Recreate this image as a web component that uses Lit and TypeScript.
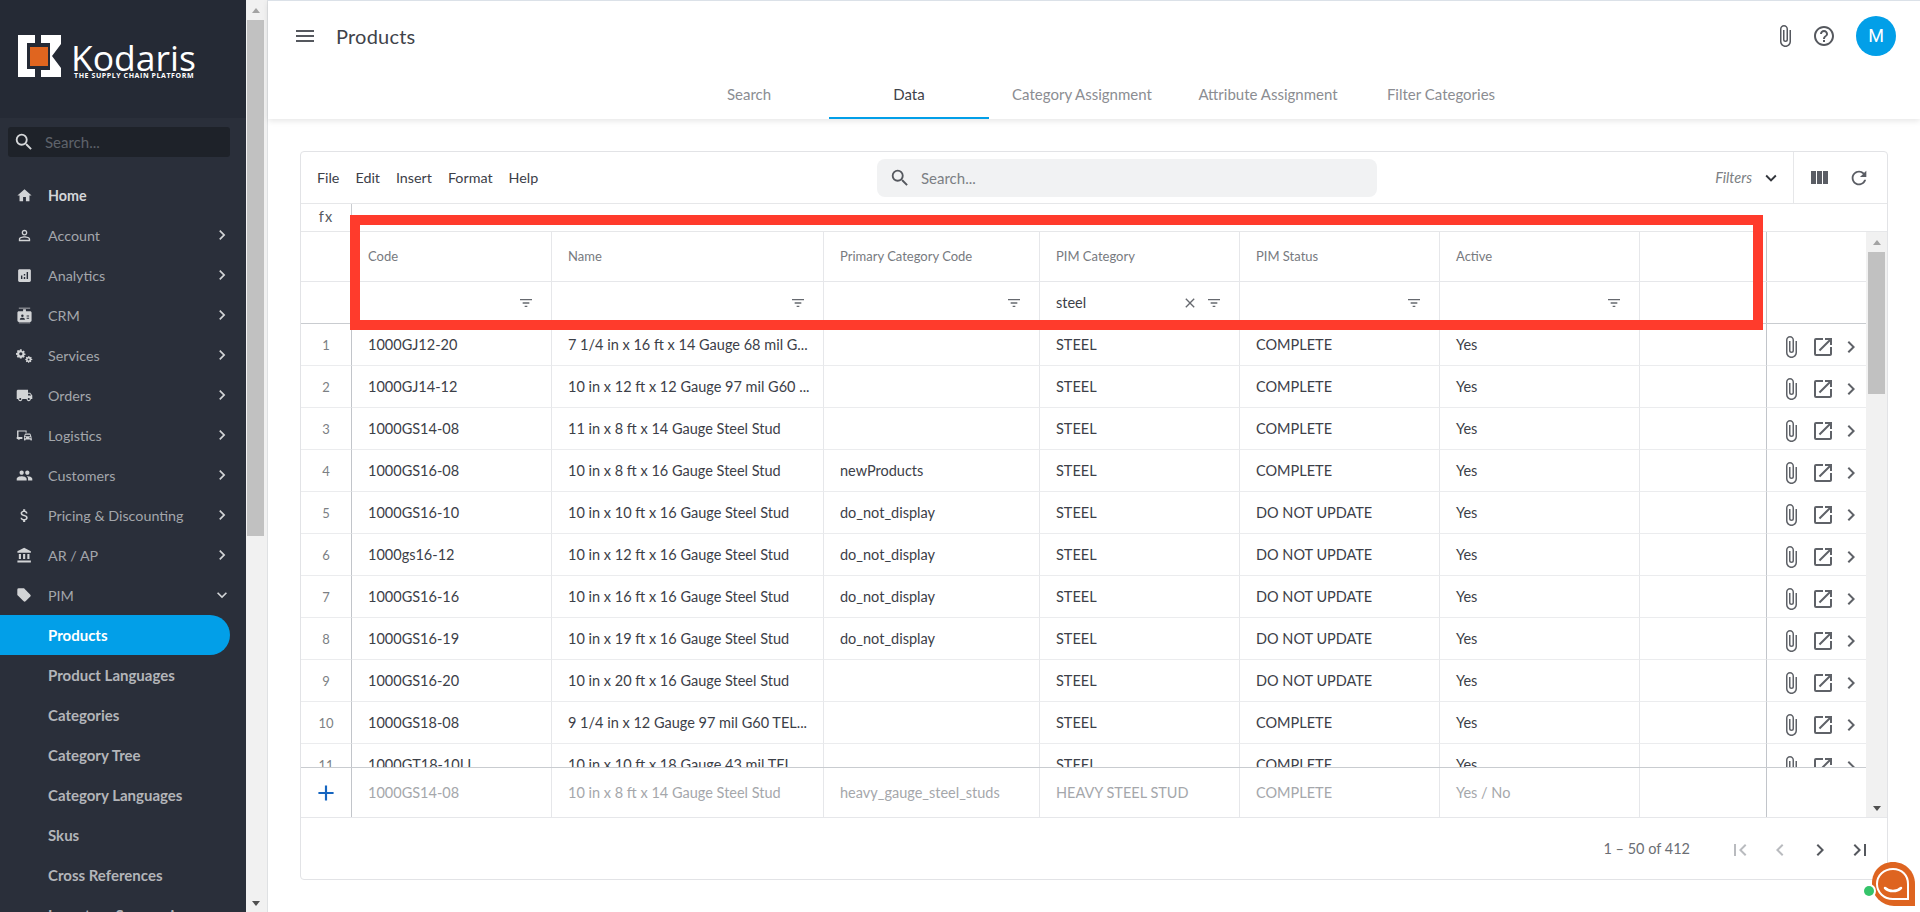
import { LitElement, html, css } from "lit";
import { customElement } from "lit/decorators.js";

const ic = (d: string, size = 24, cls = "") => html`<svg class=${cls} width=${size} height=${size} viewBox="0 0 24 24" fill="currentColor"><path d=${d}></path></svg>`;

const P = {
  home: "M10 20v-6h4v6h5v-8h3L12 3 2 12h3v8z",
  account: "M12 5.9a2.1 2.1 0 1 1 0 4.2 2.1 2.1 0 0 1 0-4.2m0 9c2.97 0 6.1 1.46 6.1 2.1v1.1H5.9V17c0-.64 3.13-2.1 6.1-2.1M12 4C9.79 4 8 5.79 8 8s1.79 4 4 4 4-1.79 4-4-1.79-4-4-4zm0 9c-2.67 0-8 1.34-8 4v3h16v-3c0-2.66-5.33-4-8-4z",
  analytics: "M19 3H5c-1.1 0-2 .9-2 2v14c0 1.1.9 2 2 2h14c1.1 0 2-.9 2-2V5c0-1.1-.9-2-2-2zM9 17H7v-5h2v5zm4 0h-2v-3h2v3zm0-5h-2v-2h2v2zm4 5h-2V7h2v10z",
  crm: "M20 6h-6V3h-4v3H4c-1.1 0-2 .9-2 2v11c0 1.1.9 2 2 2h16c1.1 0 2-.9 2-2V8c0-1.1-.9-2-2-2zM9 10.5a1.75 1.75 0 1 1 0 3.5 1.75 1.75 0 0 1 0-3.5zM12.5 18h-7v-1c0-1.2 2.3-1.8 3.5-1.8s3.5.6 3.5 1.8v1zm6-1.5H15V15h3.5v1.5zm0-3H15V12h3.5v1.5zM20 1H4v1h16zM20 22H4v1h16z",
  services: "M13.5 9.5l-1.6-.3a5 5 0 0 0-.4-1l.9-1.4-1.7-1.7-1.4.9a5 5 0 0 0-1-.4L8 3H5.6l-.3 1.6a5 5 0 0 0-1 .4l-1.4-.9L1.2 5.8l.9 1.4a5 5 0 0 0-.4 1L0 8.5v2.4l1.6.3c.1.3.2.7.4 1l-.9 1.4 1.7 1.7 1.4-.9c.3.2.7.3 1 .4l.3 1.6H8l.3-1.6c.3-.1.7-.2 1-.4l1.4.9 1.7-1.7-.9-1.4c.2-.3.3-.7.4-1l1.6-.3V9.5zM6.8 12a2.3 2.3 0 1 1 0-4.6 2.3 2.3 0 0 1 0 4.6zM23 18.4v-1.600l-1.200-.2-.3-.8.7-1-1.100-1.100-1 .7-.8-.3-.2-1.200H17l-.2 1.200-.8.3-1-.7-1.100 1.100.7 1-.3.8-1.200.2v1.600l1.200.2.3.8-.7 1 1.100 1.100 1-.7.8.3.2 1.200h1.600l.2-1.200.8-.3 1 .7 1.100-1.100-.7-1 .3-.8zM17.800 19a1.400 1.400 0 1 1 0-2.800 1.400 1.400 0 0 1 0 2.800z",
  orders: "M20 8h-3V4H3c-1.1 0-2 .9-2 2v11h2c0 1.66 1.34 3 3 3s3-1.34 3-3h6c0 1.66 1.34 3 3 3s3-1.34 3-3h2v-5l-3-4zM6 18.5c-.83 0-1.5-.67-1.5-1.5s.67-1.5 1.5-1.5 1.5.67 1.5 1.5-.67 1.5-1.5 1.5zm13.5-9l1.96 2.5H17V9.5h2.5zm-1.5 9c-.83 0-1.5-.67-1.5-1.5s.67-1.5 1.5-1.5 1.5.67 1.5 1.5-.67 1.5-1.5 1.5z",
  logistics: "M21.7 13.35l-1.2-3.4a1.1 1.1 0 0 0-1.05-.75h-5.9c-.48 0-.88.3-1.05.75l-1.2 3.4v4.9c0 .4.32.75.75.75h.75c.4 0 .75-.35.75-.75V17.5h6.7v.75c0 .4.32.75.75.75h.75c.42 0 .75-.35.75-.75zM13.6 10.9h5.8l.7 2h-7.2zM13.2 16a1 1 0 1 1 0-2 1 1 0 0 1 0 2zm6.6 0a1 1 0 1 1 0-2 1 1 0 0 1 0 2zM3 5h12v3h-1.5V6.5h-10V14H9v3H5.8a2 2 0 0 1-3.6 0H1v-3h.5V5z",
  customers: "M16 11c1.66 0 2.99-1.34 2.99-3S17.66 5 16 5c-1.66 0-3 1.34-3 3s1.34 3 3 3zm-8 0c1.66 0 2.99-1.34 2.99-3S9.66 5 8 5C6.34 5 5 6.34 5 8s1.34 3 3 3zm0 2c-2.33 0-7 1.17-7 3.5V19h14v-2.5c0-2.33-4.67-3.5-7-3.5zm8 0c-.29 0-.62.02-.97.05 1.16.84 1.97 1.97 1.97 3.45V19h6v-2.5c0-2.33-4.67-3.5-7-3.5z",
  dollar: "M11.8 10.9c-2.27-.59-3-1.2-3-2.15 0-1.09 1.01-1.85 2.7-1.85 1.78 0 2.44.85 2.5 2.1h2.21c-.07-1.72-1.12-3.3-3.21-3.81V3h-3v2.16c-1.94.42-3.5 1.68-3.5 3.61 0 2.31 1.91 3.46 4.7 4.13 2.5.6 3 1.48 3 2.41 0 .69-.49 1.79-2.7 1.79-2.06 0-2.87-.92-2.98-2.1h-2.2c.12 2.19 1.76 3.42 3.68 3.83V21h3v-2.15c1.95-.37 3.5-1.5 3.5-3.55 0-2.84-2.43-3.81-4.7-4.4z",
  bank: "M4 10v7h3v-7H4zm6 0v7h3v-7h-3zM2 22h19v-3H2v3zm14-12v7h3v-7h-3zM11.5 1L2 6v2h19V6l-9.5-5z",
  tag: "M12 2l9.500 9.500a2 2 0 0 1 0 2.800l-7.200 7.200a2 2 0 0 1-2.800 0L2 12V4a2 2 0 0 1 2-2z",
  right: "M10 6L8.59 7.41 13.17 12l-4.58 4.59L10 18l6-6z",
  down: "M16.59 8.59L12 13.17 7.41 8.59 6 10l6 6 6-6z",
  left: "M15.41 7.41L14 6l-6 6 6 6 1.41-1.41L10.83 12z",
  first: "M18.41 16.59L13.82 12l4.59-4.59L17 6l-6 6 6 6zM6 6h2v12H6z",
  last: "M5.59 7.41L10.18 12l-4.59 4.59L7 18l6-6-6-6zM16 6h2v12h-2z",
  search: "M15.5 14h-.79l-.28-.27A6.47 6.47 0 0 0 16 9.5 6.5 6.5 0 1 0 9.5 16c1.61 0 3.09-.59 4.23-1.57l.27.28v.79l5 4.99L20.49 19l-4.99-5zm-6 0C7.01 14 5 11.99 5 9.5S7.01 5 9.5 5 14 7.01 14 9.5 11.99 14 9.5 14z",
  menu: "M3 18h18v-2H3v2zm0-5h18v-2H3v2zm0-7v2h18V6H3z",
  clip: "M16.5 6v11.5c0 2.21-1.79 4-4 4s-4-1.79-4-4V5a2.5 2.5 0 0 1 5 0v10.5c0 .55-.45 1-1 1s-1-.45-1-1V6H10v9.5a2.5 2.5 0 0 0 5 0V5c0-2.21-1.79-4-4-4S7 2.79 7 5v12.5c0 3.04 2.46 5.5 5.5 5.5s5.5-2.46 5.5-5.5V6h-1.5z",
  help: "M11 18h2v-2h-2v2zm1-16C6.48 2 2 6.48 2 12s4.48 10 10 10 10-4.48 10-10S17.52 2 12 2zm0 18c-4.41 0-8-3.59-8-8s3.59-8 8-8 8 3.59 8 8-3.59 8-8 8zm0-14c-2.21 0-4 1.79-4 4h2c0-1.1.9-2 2-2s2 .9 2 2c0 2-3 1.75-3 5h2c0-2.25 3-2.5 3-5 0-2.21-1.79-4-4-4z",
  filter: "M3 6h18v2H3zM7 11h10v2H7zM10 16h4v2h-4z",
  close: "M19 6.41L17.59 5 12 10.59 6.41 5 5 6.41 10.59 12 5 17.59 6.41 19 12 13.41 17.59 19 19 17.59 13.41 12z",
  open: "M19 19H5V5h7V3H5a2 2 0 0 0-2 2v14a2 2 0 0 0 2 2h14c1.1 0 2-.9 2-2v-7h-2v7zM14 3v2h3.59l-9.83 9.83 1.41 1.41L19 6.41V10h2V3h-7z",
  columns: "M10 18h5V5h-5v13zm-6 0h5V5H4v13zM16 5v13h5V5h-5z",
  refresh: "M17.65 6.35A7.958 7.958 0 0 0 12 4c-4.42 0-7.99 3.58-7.99 8s3.57 8 7.99 8c3.73 0 6.84-2.55 7.73-6h-2.08A5.99 5.99 0 0 1 12 18c-3.31 0-6-2.69-6-6s2.69-6 6-6c1.66 0 3.14.69 4.22 1.78L13 11h7V4l-2.35 2.35z",
  plus: "M19 13h-6v6h-2v-6H5v-2h6V5h2v6h6v2z",
};

const NAV: [string, string, boolean][] = [
  ["Home", P.home, false],
  ["Account", P.account, true],
  ["Analytics", P.analytics, true],
  ["CRM", P.crm, true],
  ["Services", P.services, true],
  ["Orders", P.orders, true],
  ["Logistics", P.logistics, true],
  ["Customers", P.customers, true],
  ["Pricing & Discounting", P.dollar, true],
  ["AR / AP", P.bank, true],
];
const SUB = ["Product Languages", "Categories", "Category Tree", "Category Languages", "Skus", "Cross References", "Inventory Summaries"];

const ROWS: string[][] = [
  ["1000GJ12-20", "7 1/4 in x 16 ft x 14 Gauge 68 mil G...", "", "COMPLETE"],
  ["1000GJ14-12", "10 in x 12 ft x 12 Gauge 97 mil G60 ...", "", "COMPLETE"],
  ["1000GS14-08", "11 in x 8 ft x 14 Gauge Steel Stud", "", "COMPLETE"],
  ["1000GS16-08", "10 in x 8 ft x 16 Gauge Steel Stud", "newProducts", "COMPLETE"],
  ["1000GS16-10", "10 in x 10 ft x 16 Gauge Steel Stud", "do_not_display", "DO NOT UPDATE"],
  ["1000gs16-12", "10 in x 12 ft x 16 Gauge Steel Stud", "do_not_display", "DO NOT UPDATE"],
  ["1000GS16-16", "10 in x 16 ft x 16 Gauge Steel Stud", "do_not_display", "DO NOT UPDATE"],
  ["1000GS16-19", "10 in x 19 ft x 16 Gauge Steel Stud", "do_not_display", "DO NOT UPDATE"],
  ["1000GS16-20", "10 in x 20 ft x 16 Gauge Steel Stud", "", "DO NOT UPDATE"],
  ["1000GS18-08", "9 1/4 in x 12 Gauge 97 mil G60 TEL...", "", "COMPLETE"],
  ["1000GT18-10LL", "10 in x 10 ft x 18 Gauge 43 mil TEL...", "", "COMPLETE"],
];

@customElement("app-root")
export class AppRoot extends LitElement {
  static styles = css`
    :host { display: block; width: 1920px; height: 912px; overflow: hidden; font-family: "Lato", "Open Sans", sans-serif; position: relative; background: #fff; color: #3c4048; }
    svg { display: block; flex: none; }
    .app { display: flex; height: 912px; }
    .side { width: 246px; flex: none; background: #2a2f3a; overflow: hidden; color: #a3a6ab; }
    .brand { height: 118px; background: #252a35; box-sizing: border-box; padding: 34px 0 0 18px; display: flex; gap: 9px; }
    .word { color: #fff; display: flex; flex-direction: column; margin-top: 7.5px; }
    .word b { font: 400 35.5px/30px "Open Sans", sans-serif; }
    .word small { font: 700 7px/8px "Open Sans", sans-serif; letter-spacing: .58px; white-space: nowrap; margin-left: 3px; }
    .sbox { margin: 9px 16px 0 8px; height: 30px; background: #1e2229; border-radius: 3px; display: flex; align-items: center; padding-left: 5px; gap: 10px; color: #d6d8da; }
    .sbox span { font-size: 15px; color: #5e636b; }
    nav { margin-top: 18px; }
    .item { height: 40px; display: flex; align-items: center; padding-left: 16px; font-size: 14.3px; margin-right: 16px; }
    .item .t { margin-left: 16px; flex: 1; white-space: nowrap; }
    .item.home .t { color: #d4d6d9; font-weight: 700; }
    .item .i { color: #d2d4d6; width: 16px; display: flex; justify-content: center; }
    .item .ch { color: #d2d4d6; margin-right: -2px; }
    .sub { height: 40px; display: flex; align-items: center; padding-left: 48px; margin-right: 16px; font-size: 15px; font-weight: 700; color: #b3b5b9; white-space: nowrap; }
    .sub.on { background: #029fe8; color: #fff; border-radius: 0 20px 20px 0; }
    .bar { width: 22px; flex: none; background: #f1f1f1; border-right: 1px solid #dfe1e3; box-sizing: border-box; display: flex; flex-direction: column; align-items: center; }
    .bar .up, .sc .up { width: 0; height: 0; border: 4.5px solid transparent; border-top: 0; border-bottom: 5px solid #a3a3a3; margin-top: 8px; }
    .bar .th { width: 17px; height: 516px; background: #c1c1c1; margin-top: 7px; margin-left: -2px; }
    .bar .dn, .sc .dn { width: 0; height: 0; border: 4.5px solid transparent; border-bottom: 0; border-top: 5px solid #505050; margin-top: auto; margin-bottom: 6px; }
    .bar .up, .bar .dn { margin-left: -2px; }
    main { flex: 1; min-width: 0; display: flex; flex-direction: column; }
    header { height: 119px; flex: none; border-top: 1px solid #dbe1e8; box-sizing: border-box; box-shadow: 0 2px 6px rgba(0,0,0,.1); position: relative; display: flex; flex-direction: column; }
    .top { height: 69px; display: flex; align-items: center; padding: 0 24px 0 25px; color: #55585e; flex: none; }
    .top h1 { font: 400 20px "Lato", sans-serif; margin: 0 0 0 19px; color: #3f434a; flex: 1; letter-spacing: .2px; }
    .avatar { width: 40px; height: 40px; border-radius: 50%; background: #029fe8; color: #fff; font-size: 18px; display: flex; align-items: center; justify-content: center; margin-left: 20px; font-family: Roboto, sans-serif; }
    .helpi { margin-left: 15px; }
    .tabs { display: flex; justify-content: center; height: 49px; margin-left: 2px; }
    .tab { width: 160px; text-align: center; font-size: 15px; line-height: 48px; color: #8b8d92; white-space: nowrap; box-sizing: border-box; height: 49px; }
    .tab.wide { width: 186px; }
    .tab.on { color: #3f434a; border-bottom: 2px solid #029fe8; }
    .content { flex: 1; padding: 32px 32px 0 32px; min-height: 0; }
    .card { height: 729px; border: 1px solid #e2e3e6; border-radius: 4px; box-sizing: border-box; display: flex; flex-direction: column; position: relative; }
    .tools { height: 52px; flex: none; display: flex; align-items: stretch; border-bottom: 1px solid #e6e7e9; box-sizing: border-box; }
    .menu { display: flex; align-items: center; gap: 16px; padding-left: 16px; font-size: 14.3px; width: 576px; box-sizing: border-box; }
    .find { width: 500px; height: 38px; align-self: center; background: #f1f2f3; border-radius: 8px; display: flex; align-items: center; gap: 10px; padding-left: 12px; box-sizing: border-box; font-size: 15px; color: #7c7f84; }
    .find svg { color: #55585e; }
    .fil { margin-left: auto; display: flex; align-items: center; gap: 8px; font-style: italic; font-size: 14.5px; color: #7c7f84; padding-right: 11px; box-sizing: border-box; justify-content: flex-end; }
    .fil svg { color: #33363c; }
    .act { border-left: 1px solid #e6e7e9; width: 94px; flex: none; display: flex; align-items: center; gap: 17px; padding-left: 13px; box-sizing: border-box; color: #5a5d64; }
    .fx { height: 28px; flex: none; box-sizing: border-box; border-bottom: 1px solid #e6e7e9; display: flex; }
    .fx span { width: 51px; text-align: center; font-size: 14.5px; line-height: 25px; color: #55585e; border-right: 1px solid #c9ccd0; box-sizing: border-box; letter-spacing: 1px; }
    .gridwrap { height: 586px; flex: none; display: flex; }
    .tbl { flex: 1; min-width: 0; display: flex; flex-direction: column; }
    .head, .rows .r, .add { display: grid; grid-template-columns: 51px 200px 272px 216px 200px 200px 200px 127px 99px; flex: none; }
    .head > div, .r > div, .add > div { border-right: 1px solid #e6e7ea; box-sizing: border-box; padding-left: 16px; white-space: nowrap; overflow: hidden; display: flex; align-items: center; }
    .head > div:nth-child(1), .r > div:nth-child(1), .add > div:nth-child(1) { padding: 0; justify-content: center; border-right-color: #c2c5ca; }
    .head > div:nth-child(8), .r > div:nth-child(8), .add > div:nth-child(8) { border-right-color: #c2c5ca; }
    .head > div:nth-child(9), .r > div:nth-child(9), .add > div:nth-child(9) { border-right: 0; }
    .h1 { height: 50px; font-size: 13px; color: #777a80; border-bottom: 1px solid #e6e7ea; box-sizing: border-box; }
    .h1 > div { padding-bottom: 2px; }
    .h2 { height: 42px; border-bottom: 1px solid #c9ccd0; font-size: 14.5px; box-sizing: border-box; }
    .h2 > div { justify-content: flex-end; padding: 0 17px 0 16px !important; color: #66696f; gap: 8px; }
    .h2 .val { margin-right: auto; color: #3c4048; }
    .h2 > div:nth-child(1) { border-right-color: #e6e7ea !important; }
    .rows { height: 444px; overflow: hidden; flex: none; border-bottom: 1px solid #c9ccd0; box-sizing: border-box; }
    .r { height: 42px; font-size: 14.5px; color: #3c4048; }
    .r > div { border-bottom: 1px solid #ebecee; height: 42px; padding-bottom: 1px; }
    .r > div:first-child { font-size: 13px; color: #7c7f84; }
    .r .ac { padding: 5px 0 0 12px; color: #5f6268; gap: 8px; }
    .r .ac svg:last-child { margin-left: -4px; }
    .add { height: 50px; font-size: 14.5px; color: #a5a7ab; border-bottom: 1px solid #e6e7ea; box-sizing: border-box; }
    .add .pl { color: #1565c0; }
    .sc { width: 21px; flex: none; background: #f1f1f1; display: flex; flex-direction: column; align-items: center; border-bottom: 1px solid #e6e7ea; box-sizing: border-box; }
    .sc .th { width: 17px; height: 142px; background: #c1c1c1; margin-top: 7px; }
    .foot { flex: 1; display: flex; align-items: center; justify-content: flex-end; color: #6b6e74; font-size: 14.5px; padding-right: 15px; }
    .foot .cnt { margin-right: 38px; }
    .pg { display: flex; gap: 16px; color: #55585e; margin-top: 3px; }
    .pg .off { color: #b9bbbf; }
    .mark-red { position: absolute; left: 350px; top: 215px; width: 1413px; height: 115px; border: 10px solid #ff3b2c; box-sizing: border-box; pointer-events: none; }
    .chat { position: absolute; left: 1860px; top: 860px; }
  `;

  filterCell(val = "") {
    return html`<div>${val ? html`<span class="val">${val}</span>${ic(P.close, 16)}` : ""}${ic(P.filter, 16)}</div>`;
  }

  render() {
    return html`
      <div class="app">
        <aside class="side">
          <div class="brand">
            <svg width="44" height="44" viewBox="0 0 44 44">
              <path fill="#fff" d="M0 1H17V9H9V35H17V43H0Z"></path>
              <path fill="#fff" d="M23 1H43V10L34 22L43 34V43H23V36H32V9H23Z"></path>
              <rect x="12" y="13" width="18" height="19" fill="#e0651f"></rect>
            </svg>
            <div class="word"><b>Kodaris</b><small>THE SUPPLY CHAIN PLATFORM</small></div>
          </div>
          <div class="sbox">${ic(P.search, 22)}<span>Search...</span></div>
          <nav>
            ${NAV.map(([t, d, c]) => html`<div class="item ${t === "Home" ? "home" : ""}"><span class="i">${ic(d, 17)}</span><span class="t">${t}</span>${c ? html`<span class="ch">${ic(P.right, 20)}</span>` : ""}</div>`)}
            <div class="item"><span class="i">${ic(P.tag, 16)}</span><span class="t">PIM</span><span class="ch">${ic(P.down, 20)}</span></div>
            <div class="sub on">Products</div>
            ${SUB.map((s) => html`<div class="sub">${s}</div>`)}
          </nav>
        </aside>
        <div class="bar"><i class="up"></i><i class="th"></i><i class="dn"></i></div>
        <main>
          <header>
            <div class="top">
              ${ic(P.menu, 24)}
              <h1>Products</h1>
              ${ic(P.clip, 24)}
              <span class="helpi">${ic(P.help, 24)}</span>
              <span class="avatar">M</span>
            </div>
            <div class="tabs">
              <div class="tab">Search</div>
              <div class="tab on">Data</div>
              <div class="tab wide">Category Assignment</div>
              <div class="tab wide">Attribute Assignment</div>
              <div class="tab">Filter Categories</div>
            </div>
          </header>
          <div class="content">
            <div class="card">
              <div class="tools">
                <div class="menu"><span>File</span><span>Edit</span><span>Insert</span><span>Format</span><span>Help</span></div>
                <div class="find">${ic(P.search, 22)}<span>Search...</span></div>
                <div class="fil"><span>Filters</span>${ic(P.down, 22)}</div>
                <div class="act">${ic(P.columns, 24)}${ic(P.refresh, 22)}</div>
              </div>
              <div class="fx"><span>fx</span></div>
              <div class="gridwrap">
                <div class="tbl">
                  <div class="head h1"><div></div><div>Code</div><div>Name</div><div>Primary Category Code</div><div>PIM Category</div><div>PIM Status</div><div>Active</div><div></div><div></div></div>
                  <div class="head h2"><div></div>${this.filterCell()}${this.filterCell()}${this.filterCell()}${this.filterCell("steel")}${this.filterCell()}${this.filterCell()}<div></div><div></div></div>
                  <div class="rows">
                    ${ROWS.map((r, i) => html`<div class="r"><div>${i + 1}</div><div>${r[0]}</div><div>${r[1]}</div><div>${r[2]}</div><div>STEEL</div><div>${r[3]}</div><div>Yes</div><div></div><div class="ac">${ic(P.clip, 24)}${ic(P.open, 24)}${ic(P.right, 24)}</div></div>`)}
                  </div>
                  <div class="add"><div class="pl">${ic(P.plus, 26)}</div><div>1000GS14-08</div><div>10 in x 8 ft x 14 Gauge Steel Stud</div><div>heavy_gauge_steel_studs</div><div>HEAVY STEEL STUD</div><div>COMPLETE</div><div>Yes / No</div><div></div><div></div></div>
                </div>
                <div class="sc"><i class="up"></i><i class="th"></i><i class="dn"></i></div>
              </div>
              <div class="foot"><span class="cnt">1 – 50 of 412</span><div class="pg"><span class="off">${ic(P.first, 24)}</span><span class="off">${ic(P.left, 24)}</span><span>${ic(P.right, 24)}</span><span>${ic(P.last, 24)}</span></div></div>
            </div>
          </div>
        </main>
      </div>
      <div class="mark-red"></div>
      <svg class="chat" width="57" height="48" viewBox="-9 0 57 48">
        <path fill="#de6420" d="M24 2C12 2 3 11 3 23v1a22 22 0 0 0 22 22h21V24C46 11 36 2 24 2z"></path>
        <path fill="none" stroke="#fff" stroke-width="2" d="M24 9c-9 0-16 6.500-16 15s7 15 16 15h15V24C39 15.500 33 9 24 9z"></path>
        <path fill="none" stroke="#fff" stroke-width="2.500" stroke-linecap="round" d="M16 28c4 4 12 4 16 0"></path>
        <circle cx="0" cy="31" r="7" fill="#fff"></circle>
        <circle cx="0" cy="31" r="5" fill="#35c46a"></circle>
      </svg>
    `;
  }
}
